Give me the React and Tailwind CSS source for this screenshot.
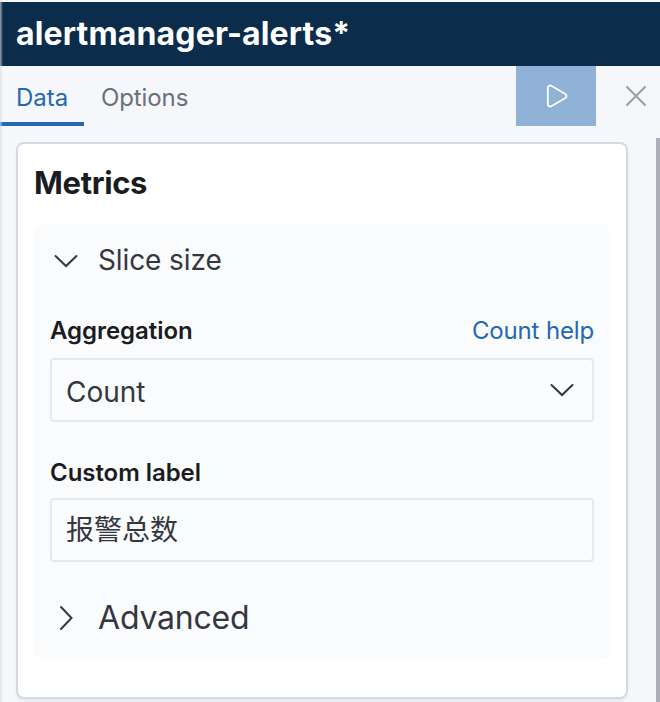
import { Play } from "lucide-react";

const font = "font-['Inter','Noto_Sans_CJK_SC',sans-serif]";

function ChevronDownIcon({ className }) {
    return (
        <svg width="24" height="14" viewBox="0 0 24 14" fill="none" stroke="#343741" strokeWidth="2" strokeLinecap="round" className={className}>
            <path d="M1.5 2 L12 12 L22.5 2" />
        </svg>
    );
}

function ChevronRightIcon({ className }) {
    return (
        <svg width="14" height="26" viewBox="0 0 14 26" fill="none" stroke="#343741" strokeWidth="2" strokeLinecap="round" className={className}>
            <path d="M2 2 L12.5 13 L2 24" />
        </svg>
    );
}

function CloseIcon() {
    return (
        <svg width="20" height="20" viewBox="0 0 20 20" fill="none" stroke="#9b9fa6" strokeWidth="2" strokeLinecap="round">
            <path d="M1 1 L19 19 M19 1 L1 19" />
        </svg>
    );
}

function Field({ label, help, gap, children }) {
    return (
        <div>
            <div className="flex h-[30px] items-center justify-between">
                <span className="text-[24px] font-semibold tracking-[-0.05px] text-[#1a1c21]">{label}</span>
                {help && <span className="text-[24px] tracking-[-0.15px] text-[#2468b0]">{help}</span>}
            </div>
            <div className={`${gap} flex h-[64px] items-center justify-between rounded-[4px] border-[2px] border-[#e6e8f0] bg-[#fbfcfd] pl-[14px] pr-[18px] text-[28px] text-[#343741]`}>
                {children}
            </div>
        </div>
    );
}

export default function App() {
    return (
        <div className={`${font} relative h-[702px] w-[660px] overflow-hidden bg-[#f5f7fa] pt-[2px]`}>
            <div className="flex h-[64px] items-center bg-[#0b2c4a] pl-[16px] text-[32px] font-bold tracking-[0.15px] text-white">
                alertmanager-alerts*
            </div>

            <div className="flex h-[60px] items-start justify-between">
                <div className="flex h-[60px] text-[24px]">
                    <div className="flex w-[84px] items-center border-b-[4px] border-[#2468b0] pl-[16px] pt-[8px] text-[#2468b0]">
                        Data
                    </div>
                    <div className="flex items-center pl-[17px] pt-[4px] tracking-[-0.1px] text-[#69707d]">Options</div>
                </div>
                <div className="flex items-start">
                    <div className="flex h-[60px] w-[80px] items-center justify-center bg-[#90b2d7]">
                        <Play size={28} strokeWidth={1.6} className="text-white" />
                    </div>
                    <div className="flex h-[60px] w-[64px] items-center justify-center pl-[16px]">
                        <CloseIcon />
                    </div>
                </div>
            </div>

            <div className="mx-[16px] mt-[16px] h-[557px] w-[612px] rounded-[8px] border-[2px] border-[#d3dae6] bg-white px-[16px] shadow-[0_2px_2px_rgba(152,162,179,0.15)]">
                <h2 className="flex h-[78px] items-center text-[31px] font-bold tracking-[-0.35px] text-[#1a1c21]">Metrics</h2>

                <div className="mt-[2px] rounded-[8px] bg-[#fafbfd] px-[16px]">
                    <div className="flex h-[74px] items-center text-[28px] tracking-[-0.1px] text-[#343741]">
                        <ChevronDownIcon className="ml-[4px]" />
                        <span className="ml-[20px] -translate-y-px">Slice size</span>
                    </div>

                    <div className="flex flex-col gap-[36px] pt-[18px]">
                        <Field label="Aggregation" help="Count help" gap="mt-[12px]">
                            <span className="pt-[4px]">Count</span>
                            <ChevronDownIcon />
                        </Field>
                        <Field label="Custom label" gap="mt-[10px]">
                            <span>报警总数</span>
                        </Field>
                    </div>

                    <div className="mt-[15px] flex h-[82px] items-center text-[32px] tracking-[-0.2px] text-[#343741]">
                        <ChevronRightIcon className="ml-[9px]" />
                        <span className="ml-[25px]">Advanced</span>
                    </div>
                </div>
            </div>

            {/* overlay scrollbar + window edge shadow */}
            <div className="absolute bottom-0 right-0 top-[138px] w-[4px] bg-[#adaeb8]" />
            <div className="absolute bottom-0 left-0 top-0 w-[3px] bg-gradient-to-r from-[#d5d8e0]/70 to-transparent" />
        </div>
    );
}
